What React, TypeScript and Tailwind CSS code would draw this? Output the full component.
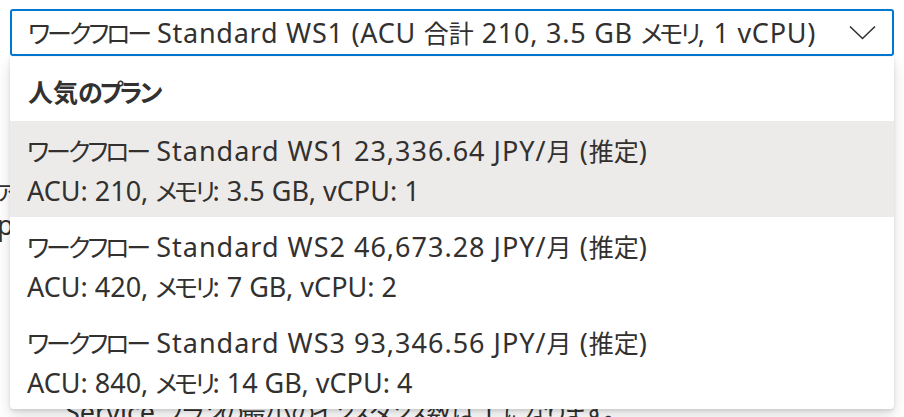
import React from "react";

const font = "font-['Noto_Sans','Noto_Sans_CJK_JP',sans-serif]";

function JP({ text }: { text: string }) {
  const re = /([\u3040-\u30ff]+)|([\u4e00-\u9fff]+)|([^\u3040-\u30ff\u4e00-\u9fff]+)/g;
  const parts: React.ReactNode[] = [];
  let m: RegExpExecArray | null;
  let i = 0;
  while ((m = re.exec(text)) !== null) {
    if (m[1]) {
      parts.push(
        <span key={i++} className="text-[25px] tracking-[-3px] [font-feature-settings:'palt']">
          {m[1]}
        </span>
      );
    } else if (m[2]) {
      parts.push(
        <span key={i++} className="text-[25px] tracking-normal">
          {m[2]}
        </span>
      );
    } else {
      parts.push(<span key={i++}>{m[3]}</span>);
    }
  }
  return <>{parts}</>;
}

const options = [
  { title: "ワークフロー Standard WS1 23,336.64 JPY/月 (推定)", sub: "ACU: 210, メモリ: 3.5 GB, vCPU: 1", active: true },
  { title: "ワークフロー Standard WS2 46,673.28 JPY/月 (推定)", sub: "ACU: 420, メモリ: 7 GB, vCPU: 2", active: false },
  { title: "ワークフロー Standard WS3 93,346.56 JPY/月 (推定)", sub: "ACU: 840, メモリ: 14 GB, vCPU: 4", active: false },
];

export default function App() {
  return (
    <div className={`relative w-[904px] h-[417px] overflow-hidden bg-white text-[#323130] ${font}`}>
      {/* select */}
      <div className="pt-[9px] pl-[10px]">
        <div className="flex items-center w-[884px] h-[47px] border-2 border-[#0078d4] rounded-[3px] pl-[16px] pr-[16px]">
          <span className="flex-1 text-[27px] leading-[34px] tracking-[0.75px] whitespace-nowrap">
            <JP text="ワークフロー Standard WS1 (ACU 合計 210, 3.5 GB メモリ, 1 vCPU)" />
          </span>
          <svg width="27" height="15" viewBox="0 0 27 15">
            <path d="M1 1.5 L13.5 13.5 L26 1.5" fill="none" stroke="#323130" strokeWidth="1.6" />
          </svg>
        </div>
      </div>

      {/* background content */}
      <div className="flex flex-col text-[27px] leading-[37px] whitespace-nowrap">
        <div className="mt-[114px] -ml-[22px]">
          <JP text="ファ" />
        </div>
        <div className="-ml-[3px] -mt-[2px]">p</div>
        <div className="mt-[150px] ml-[65px]">
          <JP text="Service プランの最小のインスタンス数は 1 になります。" />
        </div>
      </div>

      {/* dropdown panel */}
      <div className="absolute left-[10px] top-[57px] w-[884px] h-[352px] bg-white rounded-b-[4px] shadow-[0_6.4px_14.4px_rgba(0,0,0,0.13),0_1.2px_3.6px_rgba(0,0,0,0.11)] flex flex-col">
        <div className="h-[64px] flex items-center pl-[18px] pt-[8px] text-[27px] font-bold">
          <JP text="人気のプラン" />
        </div>
        {options.map((o) => (
          <div
            key={o.title}
            className={`h-[96px] pl-[17px] pt-[10px] flex flex-col text-[27px] leading-[40px] whitespace-nowrap ${o.active ? "bg-[#edebe9]" : ""}`}
          >
            <div className="tracking-[1px]">
              <JP text={o.title} />
            </div>
            <div>
              <JP text={o.sub} />
            </div>
          </div>
        ))}
      </div>
    </div>
  );
}
